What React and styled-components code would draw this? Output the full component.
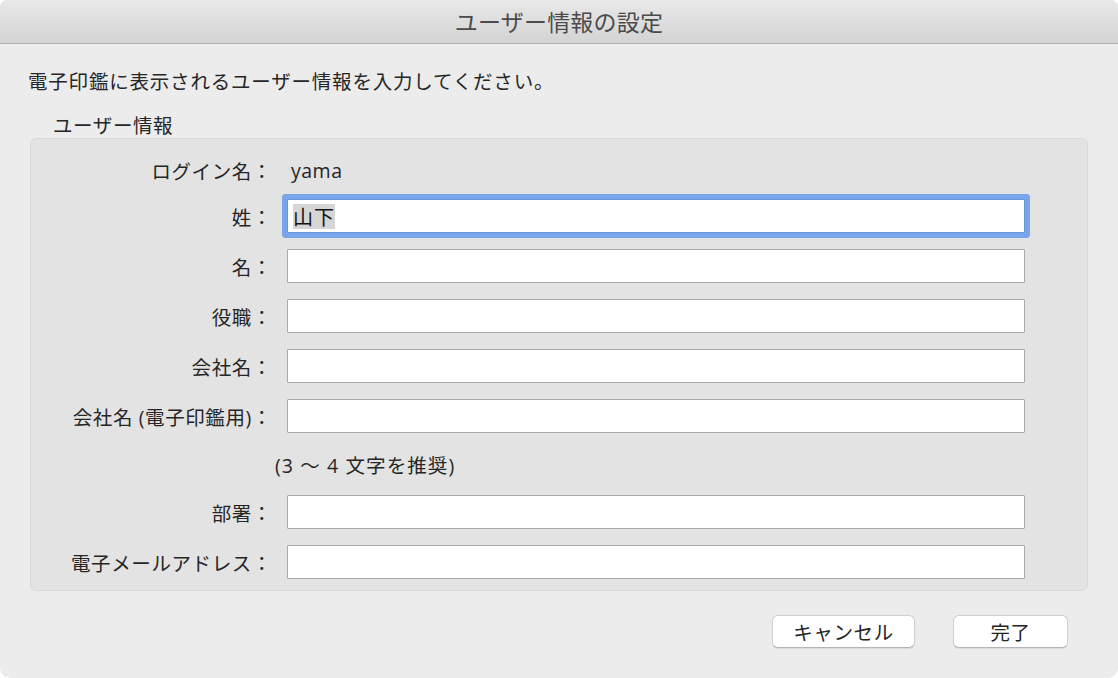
import React from "react";
import styled, { createGlobalStyle } from "styled-components";

const Global = createGlobalStyle`
  html, body { margin: 0; padding: 0; background: #ffffff; }
  body { font-family: "Open Sans", "Noto Sans CJK JP", sans-serif; }
  * { box-sizing: border-box; }
`;

const Win = styled.div`
  width: 1118px;
  height: 678px;
  background: #ececec;
  border-radius: 7px 7px 10px 10px;
  overflow: hidden;
  display: flex;
  flex-direction: column;
  color: #262626;
`;

const TitleBar = styled.div`
  height: 44px;
  flex: none;
  background: linear-gradient(#e9e9e9, #d3d3d3);
  border-bottom: 1px solid #b1b1b1;
  display: flex;
  align-items: center;
  justify-content: center;
  font-family: "Noto Sans CJK JP", sans-serif;
  font-size: 23px;
  color: #4b4b4b;
  letter-spacing: 0.2px;
  padding-bottom: 1px;
`;

const Body = styled.div`
  flex: 1;
  display: flex;
  flex-direction: column;
  padding: 0 30px 0 30px;
`;

const Intro = styled.div`
  margin-top: 23px;
  margin-left: -2px;
  height: 28px;
  line-height: 28px;
  font-size: 19.5px;
  letter-spacing: 0.8px;
  font-family: "Noto Sans CJK JP", sans-serif;
`;

const GroupLabel = styled.div`
  margin-top: 16px;
  margin-left: 23px;
  height: 28px;
  line-height: 28px;
  font-size: 19.5px;
  letter-spacing: 0.6px;
  font-family: "Noto Sans CJK JP", sans-serif;
`;

const Group = styled.div`
  margin-top: -1px;
  height: 453px;
  background: #e3e3e3;
  border: 1px solid #dadada;
  border-radius: 6px;
  padding: 14px 0 0 0;
  display: grid;
  grid-template-columns: 242px 738px;
  column-gap: 14px;
  align-content: start;
`;

const Label = styled.div`
  height: 34px;
  margin-bottom: ${(p) => (p.$tight ? "12px" : "16px")};
  display: flex;
  align-items: center;
  justify-content: flex-end;
  font-size: 19.5px;
  letter-spacing: 0.6px;
  margin-right: 1px;
  white-space: nowrap;
`;

const Value = styled.div`
  height: 34px;
  margin-bottom: 12px;
  display: flex;
  align-items: center;
  padding-left: 4px;
  font-size: 19.5px;
  letter-spacing: 0.5px;
`;

const Field = styled.div`
  height: 34px;
  margin-bottom: 16px;
  background: #ffffff;
  border: 1px solid ${(p) => (p.$focused ? "#6b95da" : "#a9a9a9")};
  border-radius: 1px;
  box-shadow: ${(p) => (p.$focused ? "0 0 0 5px #79a5ea" : "none")};
  display: flex;
  align-items: center;
  padding-left: 5px;
  font-family: "Noto Sans CJK JP", sans-serif;
  font-size: 20px;
  color: #111;
`;

const Selected = styled.span`
  background: #d6d6d6;
  line-height: 25px;
  height: 25px;
  display: inline-block;
  letter-spacing: 1px;
`;

const Note = styled.div`
  height: 30px;
  margin-bottom: 16px;
  margin-left: -12px;
  display: flex;
  align-items: center;
  font-size: 19.5px;
  letter-spacing: 1.1px;
  white-space: nowrap;
`;

const Empty = styled.div`
  height: 30px;
`;

const Buttons = styled.div`
  margin-top: 24px;
  margin-right: 20px;
  display: flex;
  justify-content: flex-end;
  gap: 38px;
`;

const Button = styled.button`
  width: ${(p) => p.$w}px;
  height: 33px;
  background: #ffffff;
  border: 1px solid #cfcfcf;
  border-bottom-color: #b5b5b5;
  border-radius: 6px;
  box-shadow: 0 1px 1px rgba(0, 0, 0, 0.08);
  font-family: "Noto Sans CJK JP", sans-serif;
  font-size: 19.5px;
  letter-spacing: 0.6px;
  color: #262626;
  padding: 0;
  display: flex;
  align-items: center;
  justify-content: center;
`;

const rows = ["名：", "役職：", "会社名：", "会社名 (電子印鑑用)："];

export default function App() {
  return (
    <>
      <Global />
      <Win>
        <TitleBar>ユーザー情報の設定</TitleBar>
        <Body>
          <Intro>電子印鑑に表示されるユーザー情報を入力してください。</Intro>
          <GroupLabel>ユーザー情報</GroupLabel>
          <Group>
            <Label $tight>ログイン名：</Label>
            <Value>yama</Value>
            <Label>姓：</Label>
            <Field $focused>
              <Selected>山下</Selected>
            </Field>
            {rows.map((l) => (
              <React.Fragment key={l}>
                <Label>{l}</Label>
                <Field />
              </React.Fragment>
            ))}
            <Empty />
            <Note>(3 ～ 4 文字を推奨)</Note>
            <Label>部署：</Label>
            <Field />
            <Label>電子メールアドレス：</Label>
            <Field />
          </Group>
          <Buttons>
            <Button $w={143}>キャンセル</Button>
            <Button $w={115}>完了</Button>
          </Buttons>
        </Body>
      </Win>
    </>
  );
}
